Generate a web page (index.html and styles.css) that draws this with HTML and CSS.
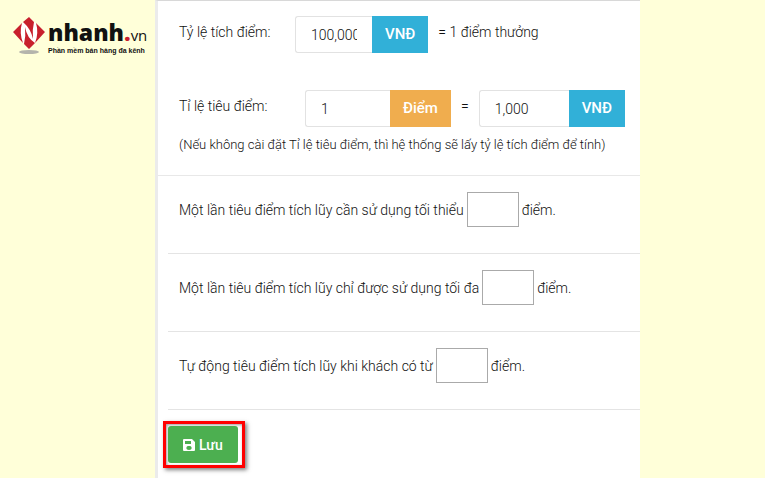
FILE: index.html
```
<!DOCTYPE html>
<html lang="vi">
<head>
    <meta charset="utf-8">
    <title>Tích điểm - Nhanh.vn</title>
    <link rel="stylesheet" href="styles.css">
</head>
<body>
    <div class="page">
        <header class="brand">
            <svg class="brand-mark" viewBox="0 0 34 40" aria-hidden="true">
                <ellipse cx="17" cy="36" rx="10" ry="2" fill="#b4b4ac"/>
                <path d="M17 1 L33 16 L17 33 L1 16 Z" fill="#fff"/>
                <path d="M10 7 L1 16 L11 27 Q7 17 10 7 Z" fill="#c8202c"/>
                <path d="M24 7 L33 16 L23 27 Q27 17 24 7 Z" fill="#c8202c"/>
                <path d="M11 6 L17 1 L22 6 Q20 14 21 23 Q19 13 11 6 Z" fill="#c8202c"/>
                <path d="M23 27 L17 33 L12 28 Q14 20 13 11 Q15 22 23 27 Z" fill="#c8202c"/>
            </svg>
            <div class="brand-text">
                <div class="brand-name">nhanh<span class="brand-dot">.</span><span class="brand-tld">vn</span></div>
                <div class="brand-slogan">Phần mềm bán hàng đa kênh</div>
            </div>
        </header>

        <form class="panel">
            <div class="rates">
                <div class="rate-row">
                    <label class="rate-label" for="earnRate">Tỷ lệ tích điểm:</label>
                    <div class="input-group">
                        <input class="input-earn" type="text" id="earnRate" value="100,000">
                        <span class="addon addon-blue">VNĐ</span>
                    </div>
                    <span class="rate-text">= 1 điểm thưởng</span>
                </div>
                <div class="rate-row">
                    <label class="rate-label rate-label-wide" for="spendPoint">Tỉ lệ tiêu điểm:</label>
                    <div class="input-group">
                        <input class="input-point" type="text" id="spendPoint" value="1">
                        <span class="addon addon-orange">Điểm</span>
                    </div>
                    <label class="rate-text" for="spendMoney">=</label>
                    <div class="input-group">
                        <input class="input-money" type="text" id="spendMoney" value="1,000">
                        <span class="addon addon-blue">VNĐ</span>
                    </div>
                </div>
                <p class="note">(Nếu không cài đặt Tỉ lệ tiêu điểm, thì hệ thống sẽ lấy tỷ lệ tích điểm để tính)</p>
            </div>

            <div class="conditions">
                <div class="condition">
                    <label for="minPoint">Một lần tiêu điểm tích lũy cần sử dụng tối thiểu</label>
                    <input type="text" id="minPoint">
                    <span>điểm.</span>
                </div>
                <div class="condition">
                    <label for="maxPoint">Một lần tiêu điểm tích lũy chỉ được sử dụng tối đa</label>
                    <input type="text" id="maxPoint">
                    <span>điểm.</span>
                </div>
                <div class="condition">
                    <label for="autoPoint">Tự động tiêu điểm tích lũy khi khách có từ</label>
                    <input type="text" id="autoPoint">
                    <span>điểm.</span>
                </div>
            </div>

            <div class="save-frame">
                <button class="save-btn" type="submit">
                    <svg class="save-icon" viewBox="0 0 12 12" aria-hidden="true">
                        <path fill="#fff" fill-rule="evenodd" d="M1 0H9L12 3V11Q12 12 11 12H1Q0 12 0 11V1Q0 0 1 0ZM2 2V5H8V2ZM6 7A2 2 0 1 0 6 10.800A2 2 0 1 0 6 7Z"/>
                    </svg>
                    Lưu
                </button>
            </div>
        </form>
    </div>
</body>
</html>
```
FILE: styles.css
```
* {
    box-sizing: border-box;
}
body {
    margin: 0;
    background: #ffffd9;
    font-family: Roboto, "Liberation Sans", sans-serif;
    font-size: 14px;
    font-weight: 300;
    color: #111;
}
input,
button {
    font-family: inherit;
    font-size: 14px;
    font-weight: inherit;
}
.page {
    display: grid;
    grid-template-columns: 155px 1fr 125px;
    min-height: 100vh;
}

/* logo */
.brand {
    display: flex;
    align-items: flex-start;
    gap: 2px;
    padding: 16px 0 0 12px;
}
.brand-mark {
    width: 34px;
    height: 40px;
    flex: none;
}
.brand-text {
    padding-top: 6px;
    color: #111;
    white-space: nowrap;
}
.brand-name {
    font-family: "Open Sans", "Noto Sans", sans-serif;
    font-size: 23px;
    font-weight: 800;
    line-height: 20px;
}
.brand-dot {
    color: #c8202c;
}
.brand-tld {
    font-size: 15px;
    font-weight: 400;
}
.brand-slogan {
    font-family: "Liberation Sans", sans-serif;
    font-size: 7px;
    font-weight: 700;
    line-height: 11px;
}

/* settings form */
.panel {
    background: #fff;
    border-left: 3px solid #ebebeb;
    border-top: 1px solid #d8d8d8;
}
.rates {
    padding: 15px 0 20px 21px;
    border-bottom: 1px solid #e8e8e8;
}
.rate-row {
    display: flex;
    align-items: flex-start;
    margin-bottom: 37px;
}
.rate-row + .rate-row {
    margin-bottom: 7px;
}
.rate-label {
    width: 116px;
    line-height: 32px;
}
.rate-label-wide {
    width: 126px;
}
.rate-text {
    padding: 0 10px;
    line-height: 32px;
}
.input-group {
    display: flex;
    height: 37px;
}
.input-group input {
    padding: 0 15px;
    border: 1px solid #e2e2e2;
    border-right: none;
    border-radius: 3px 0 0 3px;
    background: #fff;
    color: #111;
}
.input-group .input-earn {
    width: 77px;
}
.input-group .input-point {
    width: 85px;
}
.input-group .input-money {
    width: 90px;
}
.addon {
    padding: 0 13px;
    line-height: 37px;
    font-size: 15px;
    font-weight: 500;
    color: #fff;
}
.addon-blue {
    background: #31b0d8;
}
.addon-orange {
    background: #f0ad4e;
}
.note {
    margin: 0;
    font-size: 13px;
    line-height: 21px;
}
.conditions {
    padding-left: 10px;
}
.condition {
    display: flex;
    align-items: center;
    gap: 3px;
    padding: 16px 0 26px 11px;
    border-bottom: 1px solid #e4e4e4;
}
.condition input {
    width: 52px;
    height: 35px;
    border: 1px solid #aaa;
    background: #fff;
}

/* save button with its red highlight */
.save-frame {
    width: fit-content;
    margin: 11px 0 0 5px;
    padding: 2px 4px 2px 2px;
    border: 3px solid #f00;
    box-shadow: 2px 2px 4px rgba(0, 0, 0, 0.5), inset 1px 1px 3px rgba(0, 0, 0, 0.4);
}
.save-btn {
    display: flex;
    align-items: center;
    gap: 4px;
    height: 37px;
    padding: 0 15px;
    border: none;
    border-radius: 3px;
    background: #4caf50;
    color: #fff;
    font-weight: 500;
}
.save-icon {
    width: 12px;
    height: 12px;
}
```
